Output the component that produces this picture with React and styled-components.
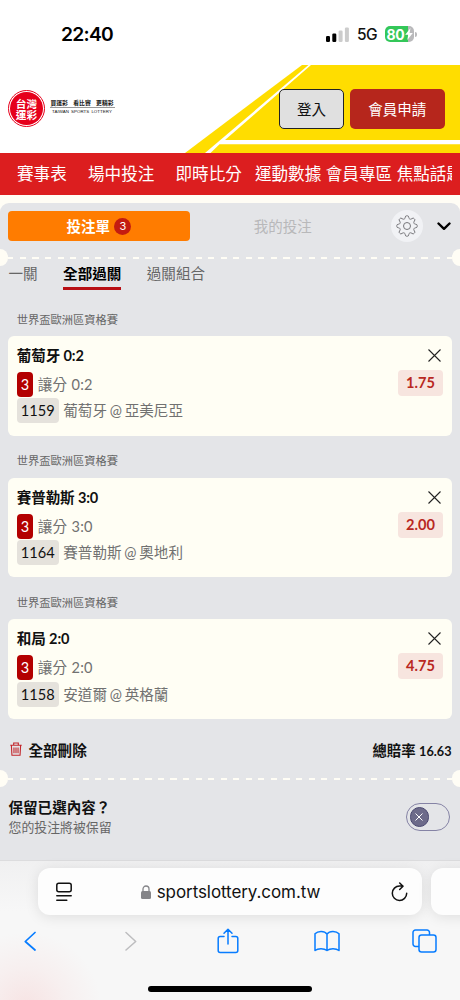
import React from "react";
import styled, { createGlobalStyle } from "styled-components";

const GlobalStyle = createGlobalStyle`
  * { box-sizing: border-box; }
  body {
    margin: 0;
    background: #fff;
    color: #111;
    font-family: Lato, "Noto Sans CJK TC", sans-serif;
  }
  svg { display: block; flex: none; }
`;

const Screen = styled.div`
  width: 460px;
  height: 1000px;
  overflow: hidden;
  display: flex;
  flex-direction: column;
  white-space: nowrap;
`;

/* ---------- status bar ---------- */
const StatusBar = styled.div`
  height: 65px;
  flex: none;
  display: flex;
  justify-content: space-between;
  padding: 22px 43px 0 61px;
  font-family: Inter, sans-serif;
`;
const Clock = styled.div`
  font-size: 19.3px;
  line-height: 24px;
  font-weight: 600;
  letter-spacing: -0.75px;
  color: #000;
`;
const StatusIcons = styled.div`
  display: flex;
  align-items: center;
  height: 24px;
`;
const Network = styled.span`
  margin: 1px 8px 0 8px;
  font-size: 15.5px;
  font-weight: 500;
  width: 20px;
  letter-spacing: -0.7px;
`;
const Battery = styled.div`
  display: flex;
  align-items: center;
  justify-content: center;
  width: 29px;
  height: 15.5px;
  border-radius: 5px;
  background: linear-gradient(90deg, #34c759 80%, #b9b9bb 80%);
  color: #fff;
  font-size: 14px;
  font-weight: 700;
  letter-spacing: -0.2px;
`;
const BatteryTip = styled.div`
  width: 2px;
  height: 5px;
  margin-left: 1px;
  border-radius: 0 2px 2px 0;
  background: #b9b9bb;
`;

/* ---------- site header ---------- */
const Header = styled.header`
  height: 88px;
  flex: none;
  position: relative;
  display: flex;
  justify-content: space-between;
  padding: 24px 15.5px 0 8px;
`;
const HeaderArt = styled.svg`
  position: absolute;
  top: 0;
  right: 0;
`;
const Brand = styled.div`
  display: flex;
  height: 39px;
  align-items: center;
`;
const Seal = styled.div`
  width: 37px;
  height: 37px;
  border-radius: 50%;
  border: 1px solid #e6001b;
  padding: 1px;
  display: flex;
`;
const SealFace = styled.div`
  flex: 1;
  border-radius: 50%;
  background: #e6001b;
  color: #fff;
  display: flex;
  flex-direction: column;
  align-items: center;
  justify-content: center;
  font-size: 10.7px;
  line-height: 11px;
  font-weight: 700;
`;
const Slogan = styled.div`
  width: 65px;
  margin-left: 4.5px;
  margin-top: -3px;
`;
const SloganTop = styled.div`
  display: flex;
  justify-content: space-between;
  padding: 0 1px;
  font-size: 5.8px;
  line-height: 9px;
  font-weight: 700;
  border-bottom: 1px solid #999;
`;
const SloganSub = styled.div`
  font-family: "Liberation Sans", sans-serif;
  font-size: 4.4px;
  line-height: 8px;
  font-weight: 400;
  text-align: center;
  color: #111;
  word-spacing: 0.8px;
  letter-spacing: 0.05px;
`;
const Actions = styled.div`
  position: relative;
  display: flex;
  gap: 6px;
`;
const HeaderButton = styled.button`
  height: 39.5px;
  width: ${(p) => (p.$primary ? 94.5 : 65)}px;
  padding: 0;
  border-radius: 5px;
  border: ${(p) => (p.$primary ? "0" : "1px solid #222")};
  background: ${(p) => (p.$primary ? "#b6261c" : "#e0e0e0")};
  color: ${(p) => (p.$primary ? "#fff" : "#111")};
  font: 400 14.5px Lato, "Noto Sans CJK TC", sans-serif;
`;

const Nav = styled.nav`
  flex: none;
  height: 41.5px;
  background: #dc1e1f;
  padding: 0 8px 0 17px;
`;
const NavTrack = styled.div`
  display: flex;
  overflow: hidden;
  height: 100%;
  color: #fff;
  font-size: 16.6px;
  line-height: 42px;
`;
const NavItem = styled.span`
  flex: none;
  margin-right: ${(p) => p.$gap}px;
`;

/* ---------- betting slip ---------- */
const Page = styled.main`
  flex: none;
  height: 665.5px;
  padding-top: 8px;
  background: #fffdf5;
`;
const Slip = styled.section`
  height: 100%;
  background: #e4e5e8;
  border-radius: 9px 9px 0 0;
`;
const SlipTabs = styled.div`
  display: flex;
  align-items: center;
  height: 47px;
  padding: 0 8.8px 0 8.2px;
`;
const SlipTab = styled.div`
  display: flex;
  align-items: center;
  justify-content: center;
  gap: 4.5px;
  height: 30px;
  padding-bottom: ${(p) => (p.$active ? 0 : 2)}px;
  width: ${(p) => (p.$active ? 181.5 : 186)}px;
  border-radius: 4px;
  font-size: 14.5px;
  font-weight: ${(p) => (p.$active ? 700 : 400)};
  background: ${(p) => (p.$active ? "#ff7c00" : "transparent")};
  color: ${(p) => (p.$active ? "#fff" : "#b8b8ba")};
`;
const SlipTabLabel = styled.span`
  padding-bottom: 1.5px;
`;
const Count = styled.span`
  width: 17px;
  height: 17px;
  border-radius: 50%;
  background: #c41c10;
  text-align: center;
  font: 400 11px/17px Inter, sans-serif;
`;
const GearButton = styled.div`
  width: 32px;
  height: 32px;
  margin-left: 15.3px;
  border-radius: 50%;
  background: #f1f2f5;
  display: grid;
  place-items: center;
`;
const Chevron = styled.svg`
  margin-left: 14px;
`;

const Perforation = styled.div`
  display: flex;
  align-items: center;
  justify-content: space-between;
  height: 17px;
  margin-top: ${(p) => p.$top}px;
`;
const Notch = styled.span`
  width: 8.3px;
  height: 17px;
  background: #fffdf5;
  border-radius: ${(p) => (p.$right ? "9px 0 0 9px" : "0 9px 9px 0")};
`;
const Dashes = styled.span`
  flex: 1;
  height: 2px;
  margin-top: 1px;
  background: repeating-linear-gradient(90deg, #fffdf5 0 5.5px, transparent 5.5px 11.9px, #fffdf5 11.9px 12.55px);
`;

const ModeTabs = styled.div`
  display: flex;
  gap: 25.5px;
  height: 22.5px;
  margin: 1.5px 0 4.5px;
  padding-left: 8.5px;
  font-size: 14.55px;
`;
const Mode = styled.div`
  height: 22.5px;
  line-height: ${(p) => (p.$active ? 13 : 14)}px;
  overflow: ${(p) => (p.$active ? "hidden" : "visible")};
  color: ${(p) => (p.$active ? "#000" : "#666")};
  font-weight: ${(p) => (p.$active ? 700 : 400)};
  border-bottom: 3px solid ${(p) => (p.$active ? "#b80f14" : "transparent")};
`;

const Bet = styled.article`
  margin: 0 8.3px;
  height: 141.6px;
`;
const League = styled.div`
  height: 42px;
  padding: 18.7px 0 0 8.5px;
  font-size: 11.25px;
  line-height: 14px;
  color: #666;
`;
const Card = styled.div`
  display: flex;
  justify-content: space-between;
  height: 99.5px;
  border-radius: 6px;
  background: #fffef4;
  padding: 9px 8.5px 0;
`;
const Info = styled.div`
  display: flex;
  flex-direction: column;
`;
const Pick = styled.div`
  font-size: 14.55px;
  line-height: 22px;
  height: 26.2px;
  font-weight: 700;
  letter-spacing: -0.12px;
  color: #111;
`;
const Line = styled.div`
  display: flex;
  align-items: center;
  height: 26.5px;
  font-size: 14.55px;
  line-height: 25px;
  word-spacing: ${(p) => (p.$market ? 0.3 : -0.9)}px;
  letter-spacing: ${(p) => (p.$market ? 0.2 : 0)}px;
  color: #717171;
`;
const Tag = styled.span`
  width: ${(p) => (p.$red ? 16.5 : 42)}px;
  height: 25px;
  margin-right: 4.5px;
  border-radius: 4px;
  text-align: center;
  letter-spacing: 0;
  background: ${(p) => (p.$red ? "#b30000" : "#e5e2dc")};
  color: ${(p) => (p.$red ? "#fff" : "#111")};
  font-size: ${(p) => (p.$red ? 14.5 : 14.6)}px;
`;
const Side = styled.div`
  display: flex;
  flex-direction: column;
  align-items: flex-end;
  gap: 8.2px;
  padding-top: 4px;
`;
const CloseIcon = styled.svg`
  margin-right: 2.5px;
`;
const Odds = styled.div`
  width: 45.5px;
  height: 26px;
  border-radius: 4px;
  background: #f7e5df;
  color: #b9281f;
  text-align: center;
  font-size: 14.6px;
  line-height: 26px;
  font-weight: 700;
`;

const Summary = styled.div`
  display: flex;
  align-items: center;
  height: 20px;
  margin-top: 20.5px;
  padding: 0 8.5px 0 10px;
  font-size: 14.55px;
  font-weight: 700;
`;
const ClearAll = styled.span`
  margin-left: 6.5px;
`;
const Total = styled.span`
  margin-left: auto;
  font-size: 14.4px;
`;
const TotalValue = styled.span`
  font-size: 12.7px;
`;

const Keep = styled.div`
  display: flex;
  justify-content: space-between;
  align-items: flex-start;
  margin-top: 10px;
  padding: 0 10.5px 0 8.5px;
`;
const KeepTitle = styled.div`
  font-size: 14.55px;
  line-height: 21px;
  font-weight: 700;
`;
const KeepNote = styled.div`
  font-size: 12.9px;
  line-height: 18px;
  color: #666;
`;
const Switch = styled.div`
  width: 44px;
  height: 27.5px;
  margin-top: 6px;
  padding: 3px;
  border: 1px solid #8583a5;
  border-radius: 14px;
`;
const Knob = styled.div`
  width: 19.5px;
  height: 19.5px;
  border-radius: 50%;
  border: 1px solid #4a4870;
  background: #6d6b8a;
  display: grid;
  place-items: center;
`;

/* ---------- browser chrome ---------- */
const Browser = styled.footer`
  flex: none;
  height: 140px;
  border-top: 1px solid #dcdcde;
  background:
    radial-gradient(circle at 26px 146px, rgba(246, 214, 214, 0.6), rgba(247, 225, 225, 0.35) 40px, rgba(247, 247, 247, 0) 75px),
    linear-gradient(#f0f0f1, #f7f7f7 50px);
`;
const AddressRow = styled.div`
  display: flex;
  gap: 9px;
  padding: 7px 0 0 38px;
`;
const Address = styled.div`
  flex: none;
  display: flex;
  align-items: center;
  width: 384px;
  height: 47px;
  padding: 0 14px 0 18px;
  border-radius: 12px;
  background: #fdfdfd;
  box-shadow: 0 2px 14px rgba(0, 0, 0, 0.1);
`;
const NextPage = styled(Address)`
  width: 60px;
`;
const Host = styled.div`
  display: flex;
  align-items: center;
  justify-content: center;
  gap: 6px;
  flex: 1;
  padding-right: 2px;
  color: #111;
  font: 400 17px Inter, sans-serif;
  letter-spacing: -0.08px;
`;
const Toolbar = styled.div`
  display: flex;
  justify-content: space-between;
  align-items: center;
  height: 30px;
  margin-top: 11px;
  padding: 0 23px 0 24.5px;
`;
const ToolSlot = styled.div`
  width: ${(p) => p.$w}px;
  display: flex;
  justify-content: flex-end;
`;
const HomeBar = styled.div`
  width: 164px;
  height: 5.5px;
  margin: 30px 0 0 148px;
  border-radius: 3px;
  background: #000;
`;

const NAV = [
  ["賽事表", 21.2],
  ["場中投注", 21.2],
  ["即時比分", 13],
  ["運動數據", 4.5],
  ["會員專區", 4.5],
  ["焦點話題", 0],
];
const BETS = [
  { pick: "葡萄牙 0:2", line: "讓分 0:2", code: "1159", match: "葡萄牙 @ 亞美尼亞", odds: "1.75" },
  { pick: "賽普勒斯 3:0", line: "讓分 3:0", code: "1164", match: "賽普勒斯 @ 奧地利", odds: "2.00" },
  { pick: "和局 2:0", line: "讓分 2:0", code: "1158", match: "安道爾 @ 英格蘭", odds: "4.75" },
];

function gearPath() {
  const pts = [];
  for (let i = 0; i <= 96; i++) {
    const a = (i / 96) * Math.PI * 2;
    const wave = Math.cos(8 * a);
    const r = 8.9 + 1.35 * Math.tanh(2.2 * wave);
    pts.push(`${(11 + r * Math.sin(a)).toFixed(2)} ${(11 - r * Math.cos(a)).toFixed(2)}`);
  }
  return `M${pts.join("L")}Z`;
}

function Divider({ top }) {
  return (
    <Perforation $top={top}>
      <Notch />
      <Dashes />
      <Notch $right />
    </Perforation>
  );
}

function BetItem({ bet }) {
  return (
    <Bet>
      <League>世界盃歐洲區資格賽</League>
      <Card>
        <Info>
          <Pick>{bet.pick}</Pick>
          <Line $market><Tag $red>3</Tag>{bet.line}</Line>
          <Line><Tag>{bet.code}</Tag>{bet.match}</Line>
        </Info>
        <Side>
          <CloseIcon width="13" height="13" viewBox="0 0 13 13" stroke="#222" strokeWidth="1.1">
            <path d="M.5.5l12 12M12.500.5l-12 12" />
          </CloseIcon>
          <Odds>{bet.odds}</Odds>
        </Side>
      </Card>
    </Bet>
  );
}

export default function App() {
  return (
    <Screen>
      <GlobalStyle />
      <StatusBar>
        <Clock>22:40</Clock>
        <StatusIcons>
          <svg width="23" height="15" viewBox="0 0 23 15">
            <rect x="0" y="9" width="4" height="6" rx="1.2" fill="#000" />
            <rect x="6.300" y="6.500" width="4" height="8.500" rx="1.200" fill="#000" />
            <rect x="12.600" y="3.500" width="4" height="11.500" rx="1.200" fill="#ccc" />
            <rect x="18.900" y="0.500" width="4" height="14.500" rx="1.200" fill="#ccc" />
          </svg>
          <Network>5G</Network>
          <Battery>
            80
            <svg width="8" height="12" viewBox="0 0 8 12"><path d="M5.500 0L.2 6.800h3L2.300 12 7.800 5H4.600z" fill="#fff" /></svg>
          </Battery>
          <BatteryTip />
        </StatusIcons>
      </StatusBar>

      <Header>
        <HeaderArt width="276" height="88" viewBox="0 0 276 88" fill="#ffdd00">
          <path d="M118 0H124.500L21 88H1z" />
          <path d="M127 0H276V75H41z" />
          <path d="M35.500 79.300H276V88H26.500z" />
        </HeaderArt>
        <Brand>
          <Seal>
            <SealFace><span>台灣</span><span>運彩</span></SealFace>
          </Seal>
          <Slogan>
            <SloganTop><span>買運彩</span><span>看比賽</span><span>更精彩</span></SloganTop>
            <SloganSub>TAIWAN SPORTS LOTTERY</SloganSub>
          </Slogan>
        </Brand>
        <Actions>
          <HeaderButton>登入</HeaderButton>
          <HeaderButton $primary>會員申請</HeaderButton>
        </Actions>
      </Header>

      <Nav>
        <NavTrack>
          {NAV.map(([label, gap]) => <NavItem key={label} $gap={gap}>{label}</NavItem>)}
        </NavTrack>
      </Nav>

      <Page>
        <Slip>
          <SlipTabs>
            <SlipTab $active><SlipTabLabel>投注單</SlipTabLabel><Count>3</Count></SlipTab>
            <SlipTab>我的投注</SlipTab>
            <GearButton>
              <svg width="22" height="22" viewBox="0 0 22 22" fill="none" stroke="#77777b" strokeWidth="1">
                <path d={gearPath()} strokeLinejoin="round" />
                <circle cx="11" cy="11" r="3.500" />
              </svg>
            </GearButton>
            <Chevron width="14" height="9" viewBox="0 0 14 9" fill="none" stroke="#000" strokeWidth="2.400">
              <path d="M1.500 1.500L7 6.800l5.500-5.300" strokeLinecap="round" strokeLinejoin="round" />
            </Chevron>
          </SlipTabs>
          <Divider top={-1} />
          <ModeTabs>
            <Mode>一關</Mode>
            <Mode $active>全部過關</Mode>
            <Mode>過關組合</Mode>
          </ModeTabs>
          <div>
            {BETS.map((bet) => <BetItem key={bet.code} bet={bet} />)}
          </div>
          <Summary>
            <svg width="12" height="14" viewBox="0 0 13 15" fill="none" stroke="#c2262b" strokeWidth="1.200">
              <path d="M.3 3.500h12.400M4 3.300V1h5v2.300M1.500 3.800l.6 10.500h8.800l.6-10.500M4.300 6v6M6.500 6v6M8.700 6v6" />
            </svg>
            <ClearAll>全部刪除</ClearAll>
            <Total>總賠率 <TotalValue>16.63</TotalValue></Total>
          </Summary>
          <Divider top={11} />
          <Keep>
            <div>
              <KeepTitle>保留已選內容？</KeepTitle>
              <KeepNote>您的投注將被保留</KeepNote>
            </div>
            <Switch>
              <Knob>
                <svg width="8" height="8" viewBox="0 0 8 8" stroke="#fff" strokeWidth="1"><path d="M.5.5l7 7M7.500.5l-7 7" /></svg>
              </Knob>
            </Switch>
          </Keep>
        </Slip>
      </Page>

      <Browser>
        <AddressRow>
          <Address>
            <svg width="16" height="20" viewBox="0 0 16 20" fill="none" stroke="#111" strokeWidth="1.500" strokeLinecap="round">
              <rect x=".8" y="1.300" width="14.400" height="8.500" rx="2" />
              <path d="M.8 13.800h14.400M.8 18.300h10" />
            </svg>
            <Host>
              <svg width="10" height="14" viewBox="0 0 10 14" fill="none">
                <rect y="6" width="10" height="8" rx="1.500" fill="#858589" />
                <path d="M2 7V4a3 3 0 016 0v3" stroke="#858589" strokeWidth="1.300" />
              </svg>
              sportslottery.com.tw
            </Host>
            <svg width="17" height="20" viewBox="0 0 17 20" fill="none" stroke="#111" strokeWidth="1.500" strokeLinecap="round" strokeLinejoin="round">
              <path d="M15.700 11.300A7.200 7.200 0 118.500 4H12M8.700 1L12 4.200 8.700 7.500" />
            </svg>
          </Address>
          <NextPage />
        </AddressRow>
        <Toolbar>
          <ToolSlot $w={11}>
            <svg width="12" height="20" viewBox="0 0 12 20" fill="none" stroke="#077cff" strokeWidth="1.700" strokeLinecap="round" strokeLinejoin="round">
              <path d="M11 1.500L1.300 10.500 11 19" />
            </svg>
          </ToolSlot>
          <ToolSlot $w={31}>
            <svg width="12" height="20" viewBox="0 0 12 20" fill="none" stroke="#bdbdbf" strokeWidth="1.500" strokeLinecap="round" strokeLinejoin="round">
              <path d="M1 1.500L10.700 10.500 1 19" />
            </svg>
          </ToolSlot>
          <ToolSlot $w={31}>
            <svg width="22" height="26" viewBox="0 0 22 26" fill="none" stroke="#077cff" strokeWidth="1.500" strokeLinecap="round" strokeLinejoin="round">
              <path d="M7 8.500H3.200a2 2 0 00-2 2V22.500a2 2 0 002 2h15.600a2 2 0 002-2V10.500a2 2 0 00-2-2H15M11 16V1.500M7 5.300l4-4 4 4" />
            </svg>
          </ToolSlot>
          <ToolSlot $w={30}>
            <svg width="26" height="22" viewBox="0 0 26 22" fill="none" stroke="#077cff" strokeWidth="1.500" strokeLinejoin="round">
              <path d="M13 4C10.500.6 4 .5 1 3.800V20.500C4 18 10 18 13 20.500 16 18 22 18 25 20.500V3.800C22 .5 15.500.6 13 4zM13 4v16" />
            </svg>
          </ToolSlot>
          <ToolSlot $w={26}>
            <svg width="25" height="24" viewBox="0 0 25 24" fill="none" stroke="#077cff" strokeWidth="1.500">
              <rect x="7" y="6" width="17" height="17" rx="2.500" />
              <path d="M7 17.500H3.500A2.500 2.500 0 011 15V3.500A2.500 2.500 0 013.500 1H15a2.500 2.500 0 012.500 2.500V6" />
            </svg>
          </ToolSlot>
        </Toolbar>
        <HomeBar />
      </Browser>
    </Screen>
  );
}
